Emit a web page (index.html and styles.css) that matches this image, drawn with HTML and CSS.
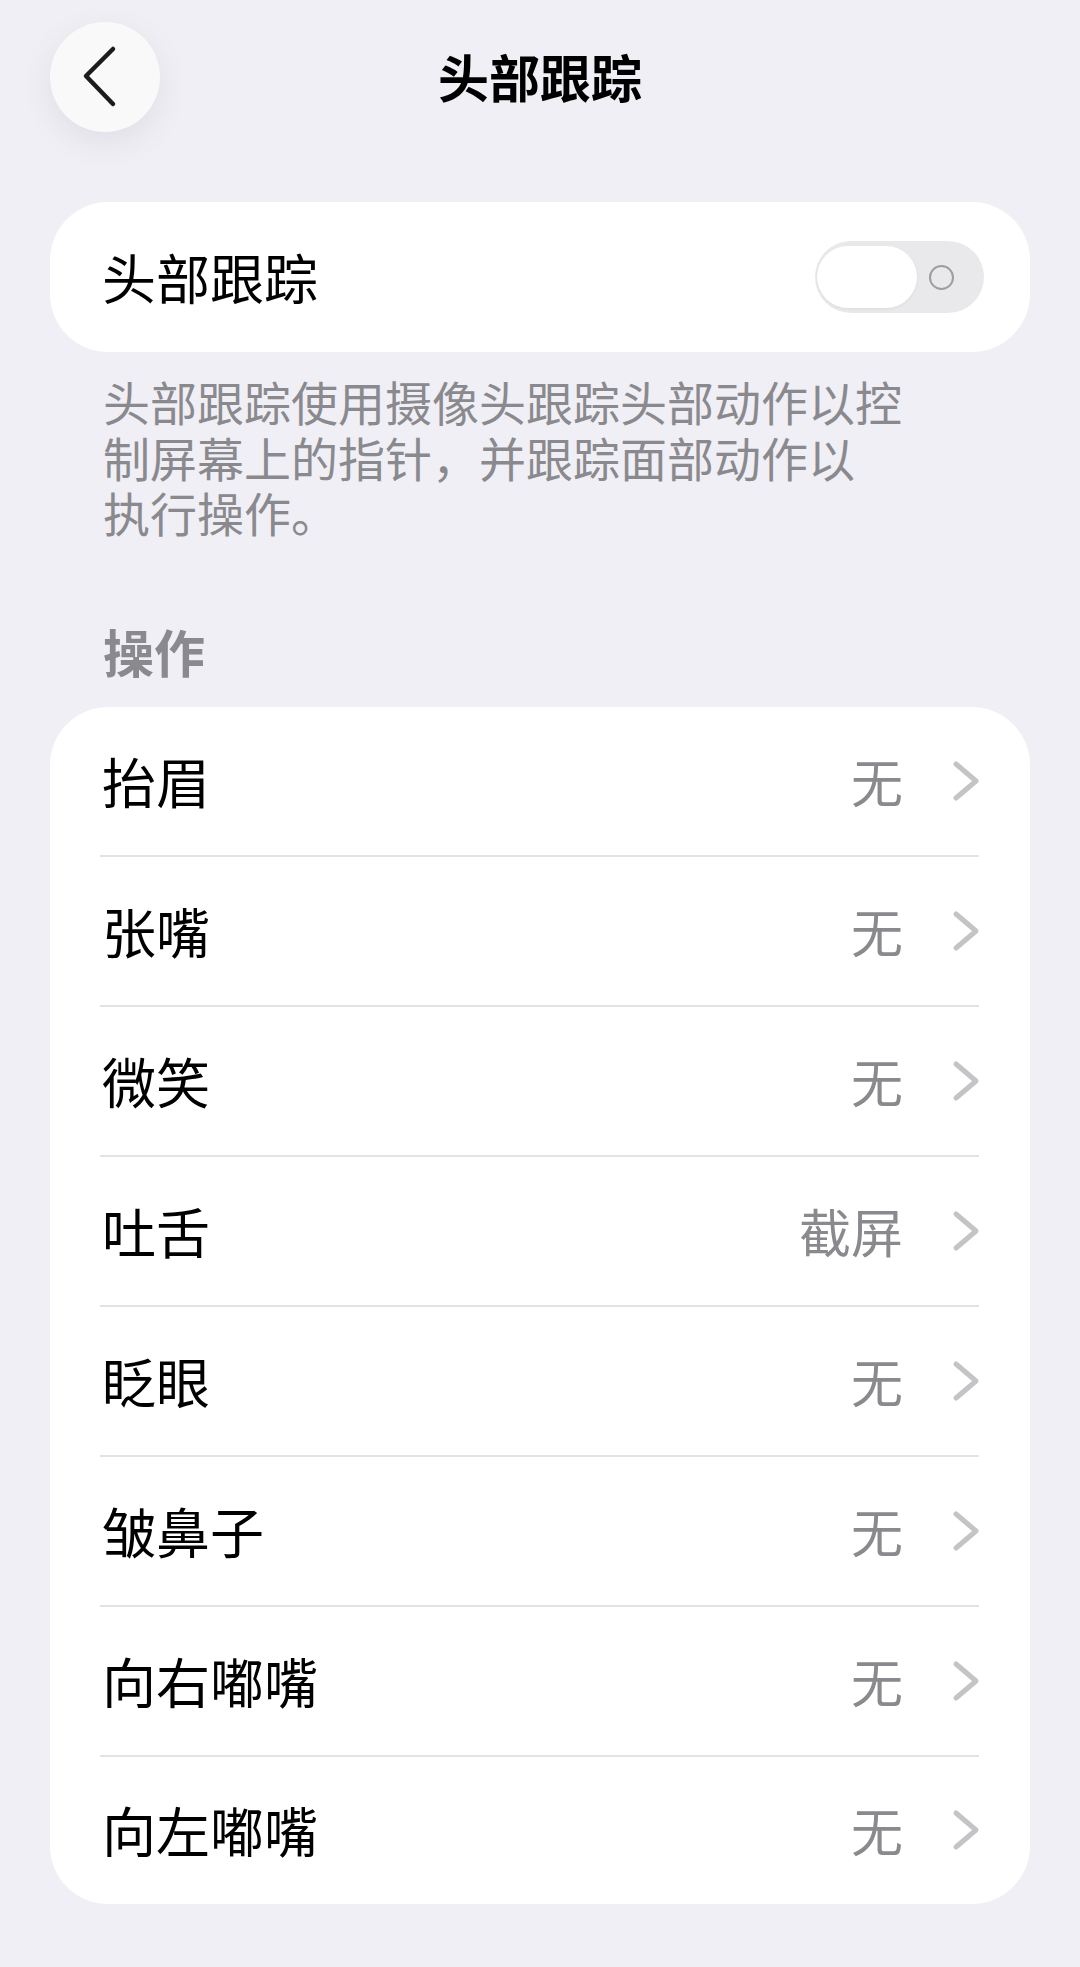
FILE: index.html
```html
<!DOCTYPE html>
<html lang="zh">
<head>
  <meta charset="UTF-8" />
  <title>头部跟踪</title>
  <meta name="viewport" content="width=1080"/>
  <link rel="stylesheet" href="styles.css">
</head>
<body>
  <div class="nav">
    <button class="back" aria-label="返回">
      <svg width="40" height="64" viewBox="0 0 40 64">
        <path d="M33 4 L6 31 L33 59" fill="none" stroke="#1c1c1e" stroke-width="4.5" stroke-linecap="round" stroke-linejoin="round"/>
      </svg>
    </button>
    <div class="nav-title">头部跟踪</div>
    <div></div>
  </div>

  <div class="card switch-card">
    <span class="label">头部跟踪</span>
    <div class="toggle">
      <div class="knob"></div>
      <div class="off-mark"></div>
    </div>
  </div>
  <div class="footnote">
    <div class="fn-line">头部跟踪使用摄像头跟踪头部动作以控</div>
    <div class="fn-line">制屏幕上的指针，并跟踪面部动作以</div>
    <div class="fn-line">执行操作。</div>
  </div>

  <div class="section-title">操作</div>
  <div class="card list">
    <div class="row"><span class="label">抬眉</span><span class="value">无</span><span class="chev"></span></div>
    <div class="row"><span class="label">张嘴</span><span class="value">无</span><span class="chev"></span></div>
    <div class="row"><span class="label">微笑</span><span class="value">无</span><span class="chev"></span></div>
    <div class="row"><span class="label">吐舌</span><span class="value">截屏</span><span class="chev"></span></div>
    <div class="row"><span class="label">眨眼</span><span class="value">无</span><span class="chev"></span></div>
    <div class="row"><span class="label">皱鼻子</span><span class="value">无</span><span class="chev"></span></div>
    <div class="row"><span class="label">向右嘟嘴</span><span class="value">无</span><span class="chev"></span></div>
    <div class="row"><span class="label">向左嘟嘴</span><span class="value">无</span><span class="chev"></span></div>
  </div>

  <script>
    // same disclosure arrow on every row
    var chev = '<svg width="30" height="44" viewBox="0 0 30 44"><path d="M5 5 L25 22 L5 39" fill="none" stroke="#c4c4c7" stroke-width="5" stroke-linecap="round" stroke-linejoin="round"/></svg>';
    document.querySelectorAll('.chev').forEach(function (el) { el.innerHTML = chev; });
  </script>
</body>
</html>
```

FILE: styles.css
```css
body {
  margin: 0;
  padding: 0 50px;
  background: #f0eff5;
  color: #000;
  font-family: "Noto Sans CJK SC", "Noto Sans", sans-serif;
  min-height: 100vh;
}
.nav {
  display: grid;
  grid-template-columns: 110px 1fr 110px;
  align-items: center;
  padding-top: 22px;
  height: 110px;
}
.back {
  width: 110px;
  height: 110px;
  border-radius: 50%;
  border: none;
  background: #f9f9f9;
  box-shadow: 0 10px 34px rgba(0, 0, 0, 0.07);
  display: flex;
  align-items: center;
  justify-content: center;
  padding: 0 10px 0 0;
}
.nav-title {
  text-align: center;
  font-size: 51px;
  font-weight: 700;
  line-height: 60px;
  margin-top: -2px;
}
.card {
  background: #fff;
  border-radius: 58px;
}
.switch-card {
  margin-top: 70px;
  height: 150px;
  display: flex;
  align-items: center;
  justify-content: space-between;
  padding: 0 46px 0 52px;
}
.label {
  font-size: 54px;
  line-height: 60px;
  flex: 1;
}
.toggle {
  width: 169px;
  height: 72px;
  border-radius: 36px;
  background: #e9e9eb;
  display: flex;
  align-items: center;
  padding-left: 2px;
  box-sizing: border-box;
}
.knob {
  width: 100px;
  height: 62px;
  border-radius: 31px;
  background: #fff;
  box-shadow: 0 1px 3px rgba(0, 0, 0, 0.06);
}
.off-mark {
  width: 21px;
  height: 21px;
  border-radius: 50%;
  border: 2.5px solid #9d9da1;
  margin-left: 12px;
}
.footnote {
  margin-top: 25px;
  padding-left: 53px;
  font-family: "Liberation Sans", "Noto Sans CJK SC", sans-serif;
  font-size: 47px;
  color: #8a8a8e;
}
.fn-line {
  height: 55.5px;
  line-height: 55.5px;
  white-space: nowrap;
}
.section-title {
  margin-top: 77px;
  padding-left: 53px;
  font-size: 51px;
  font-weight: 600;
  line-height: 60px;
  color: #8a8a8e;
}
.list {
  margin-top: 26px;
}
.row {
  display: flex;
  align-items: center;
  height: 150px;
  margin: 0 51px 0 50px;
  border-bottom: 2px solid #e3e3e5;
  box-sizing: border-box;
}
.row:last-child {
  border-bottom: none;
  height: 147px;
}
.row .label {
  padding-left: 2px;
}
.value {
  font-size: 52px;
  line-height: 60px;
  color: #8a8a8e;
}
.chev {
  display: flex;
  margin-left: 48px;
  margin-right: -2px;
}
```
